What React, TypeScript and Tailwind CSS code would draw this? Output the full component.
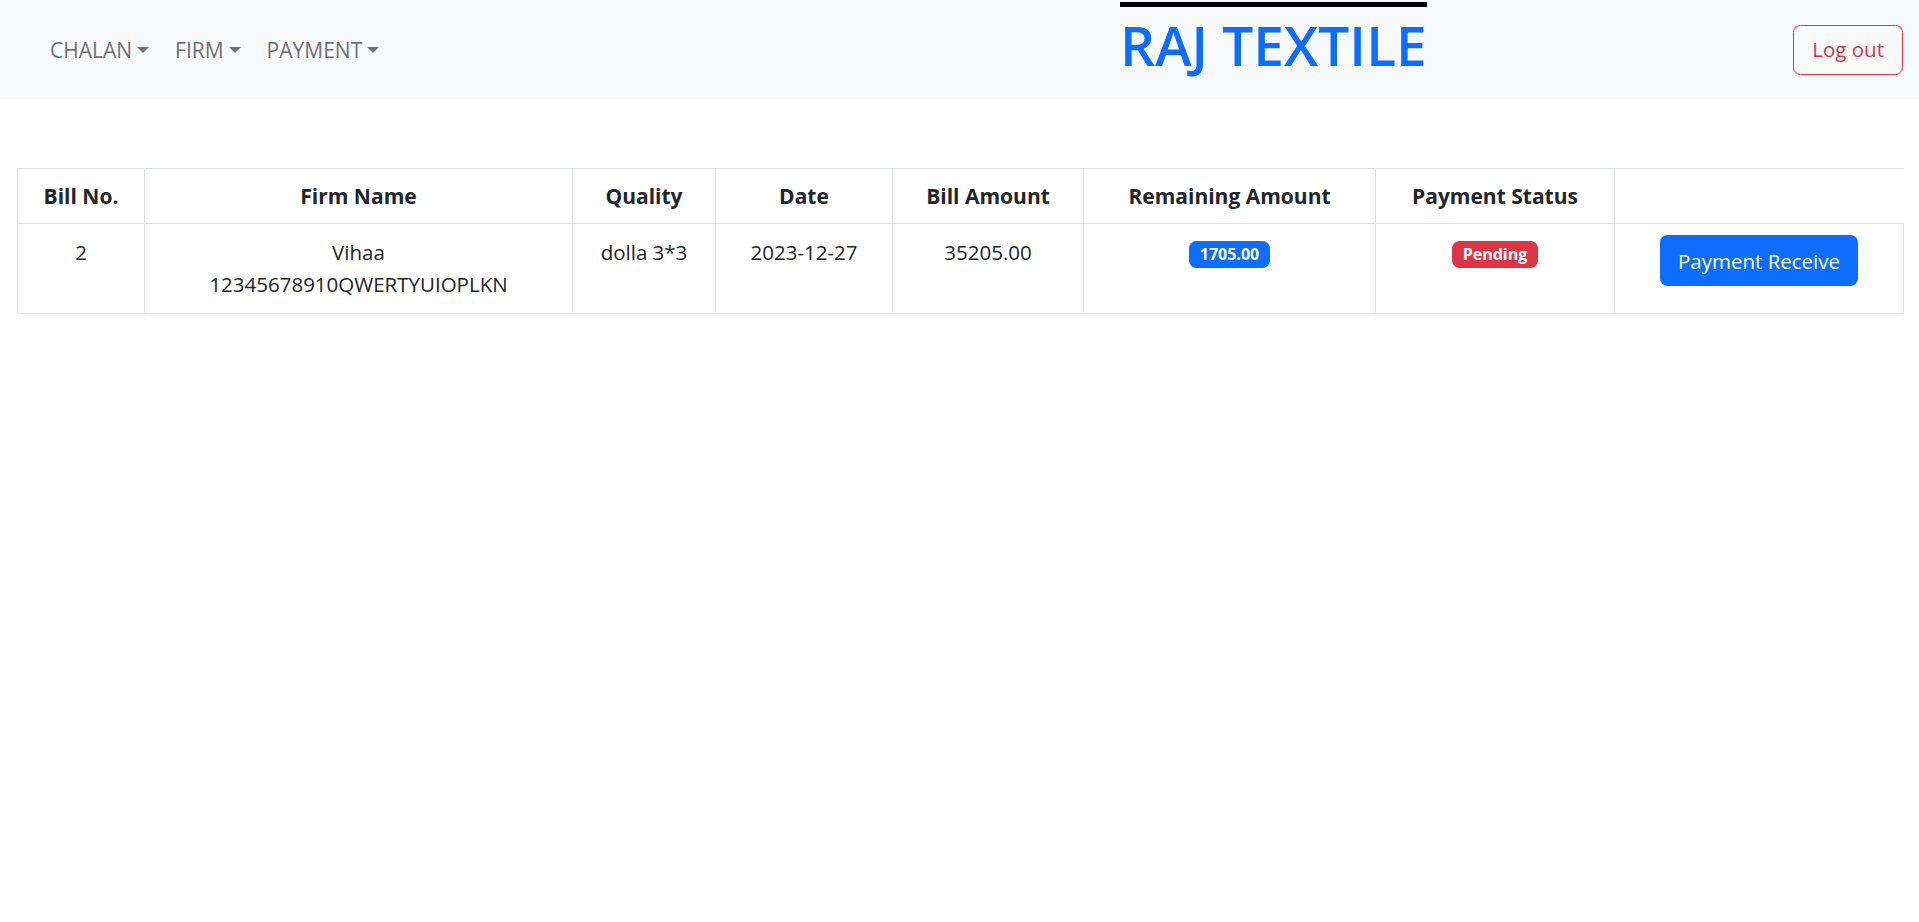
export default function App() {
  const navItems = ["CHALAN", "FIRM", "PAYMENT"];

  return (
    <div className="min-h-screen bg-white font-['Open_Sans',sans-serif] text-[#212529]">
      <nav className="h-[99px] bg-[#f8f9fa] flex pl-[37px] pr-[16px]">
        <ul className="w-[1083px] flex items-center">
          {navItems.map((item) => (
            <li key={item}>
              <a className="flex items-center px-[13px] py-[10px] text-[21px] leading-[30px] text-[#707172] cursor-pointer">
                {item}
                <span className="inline-block w-0 h-0 ml-[5px] border-t-[6px] border-t-[#707172] border-x-[6.5px] border-x-transparent"></span>
              </a>
            </li>
          ))}
        </ul>
        <h1 className="self-start mt-[2px] border-t-[5px] border-black pt-[6px] text-[55px] leading-[64px] font-semibold text-[#0d6efd]">
          RAJ TEXTILE
        </h1>
        <div className="flex-1"></div>
        <div className="flex items-center">
          <button className="h-[50px] px-[18px] border border-[#dc3545] rounded-[7.5px] text-[20.5px] text-[#dc3545] bg-transparent">
            Log out
          </button>
        </div>
      </nav>

      <div className="mt-[69px] ml-[17px] mr-[15px]">
        <table className="w-full table-fixed border-collapse text-center">
          <thead>
            <tr className="leading-[30px] text-[21px]">
              <th className="w-[127px] border border-[#dee2e6] py-[12px] px-[10px] font-bold">Bill No.</th>
              <th className="w-[428px] border border-[#dee2e6] py-[12px] px-[10px] font-bold">Firm Name</th>
              <th className="w-[143px] border border-[#dee2e6] py-[12px] px-[10px] font-bold">Quality</th>
              <th className="w-[177px] border border-[#dee2e6] py-[12px] px-[10px] font-bold">Date</th>
              <th className="w-[191px] border border-[#dee2e6] py-[12px] px-[10px] font-bold">Bill Amount</th>
              <th className="w-[292px] border border-[#dee2e6] py-[12px] px-[10px] font-bold">Remaining Amount</th>
              <th className="w-[239px] border border-[#dee2e6] py-[12px] px-[10px] font-bold">Payment Status</th>
              <th className="border-t border-b border-[#dee2e6] py-[12px] px-[10px]"></th>
            </tr>
          </thead>
          <tbody>
            <tr className="leading-[32px] align-top text-[20.5px]">
              <td className="border border-[#dee2e6] pt-[12px] pb-[13px] px-[10px]">2</td>
              <td className="border border-[#dee2e6] pt-[12px] pb-[13px] px-[10px]">
                <div>Vihaa</div>
                <div>12345678910QWERTYUIOPLKN</div>
              </td>
              <td className="border border-[#dee2e6] pt-[12px] pb-[13px] px-[10px]">dolla 3*3</td>
              <td className="border border-[#dee2e6] pt-[12px] pb-[13px] px-[10px]">2023-12-27</td>
              <td className="border border-[#dee2e6] pt-[12px] pb-[13px] px-[10px]">35205.00</td>
              <td className="border border-[#dee2e6] pt-[12px] pb-[13px] px-[10px]">
                <span className="inline-block mt-[3px] px-[11px] py-[5.5px] rounded-[7.5px] bg-[#0d6efd] text-white text-[16px] leading-[16px] font-bold">
                  1705.00
                </span>
              </td>
              <td className="border border-[#dee2e6] pt-[12px] pb-[13px] px-[10px]">
                <span className="inline-block mt-[3px] px-[11px] py-[5.5px] rounded-[7.5px] bg-[#dc3545] text-white text-[16px] leading-[16px] font-bold">
                  Pending
                </span>
              </td>
              <td className="border border-[#dee2e6] py-[11px] px-[10px]">
                <button className="h-[51px] px-[18px] rounded-[7.5px] bg-[#0d6efd] text-white text-[20.5px] leading-[30px]">
                  Payment Receive
                </button>
              </td>
            </tr>
          </tbody>
        </table>
      </div>
    </div>
  );
}
